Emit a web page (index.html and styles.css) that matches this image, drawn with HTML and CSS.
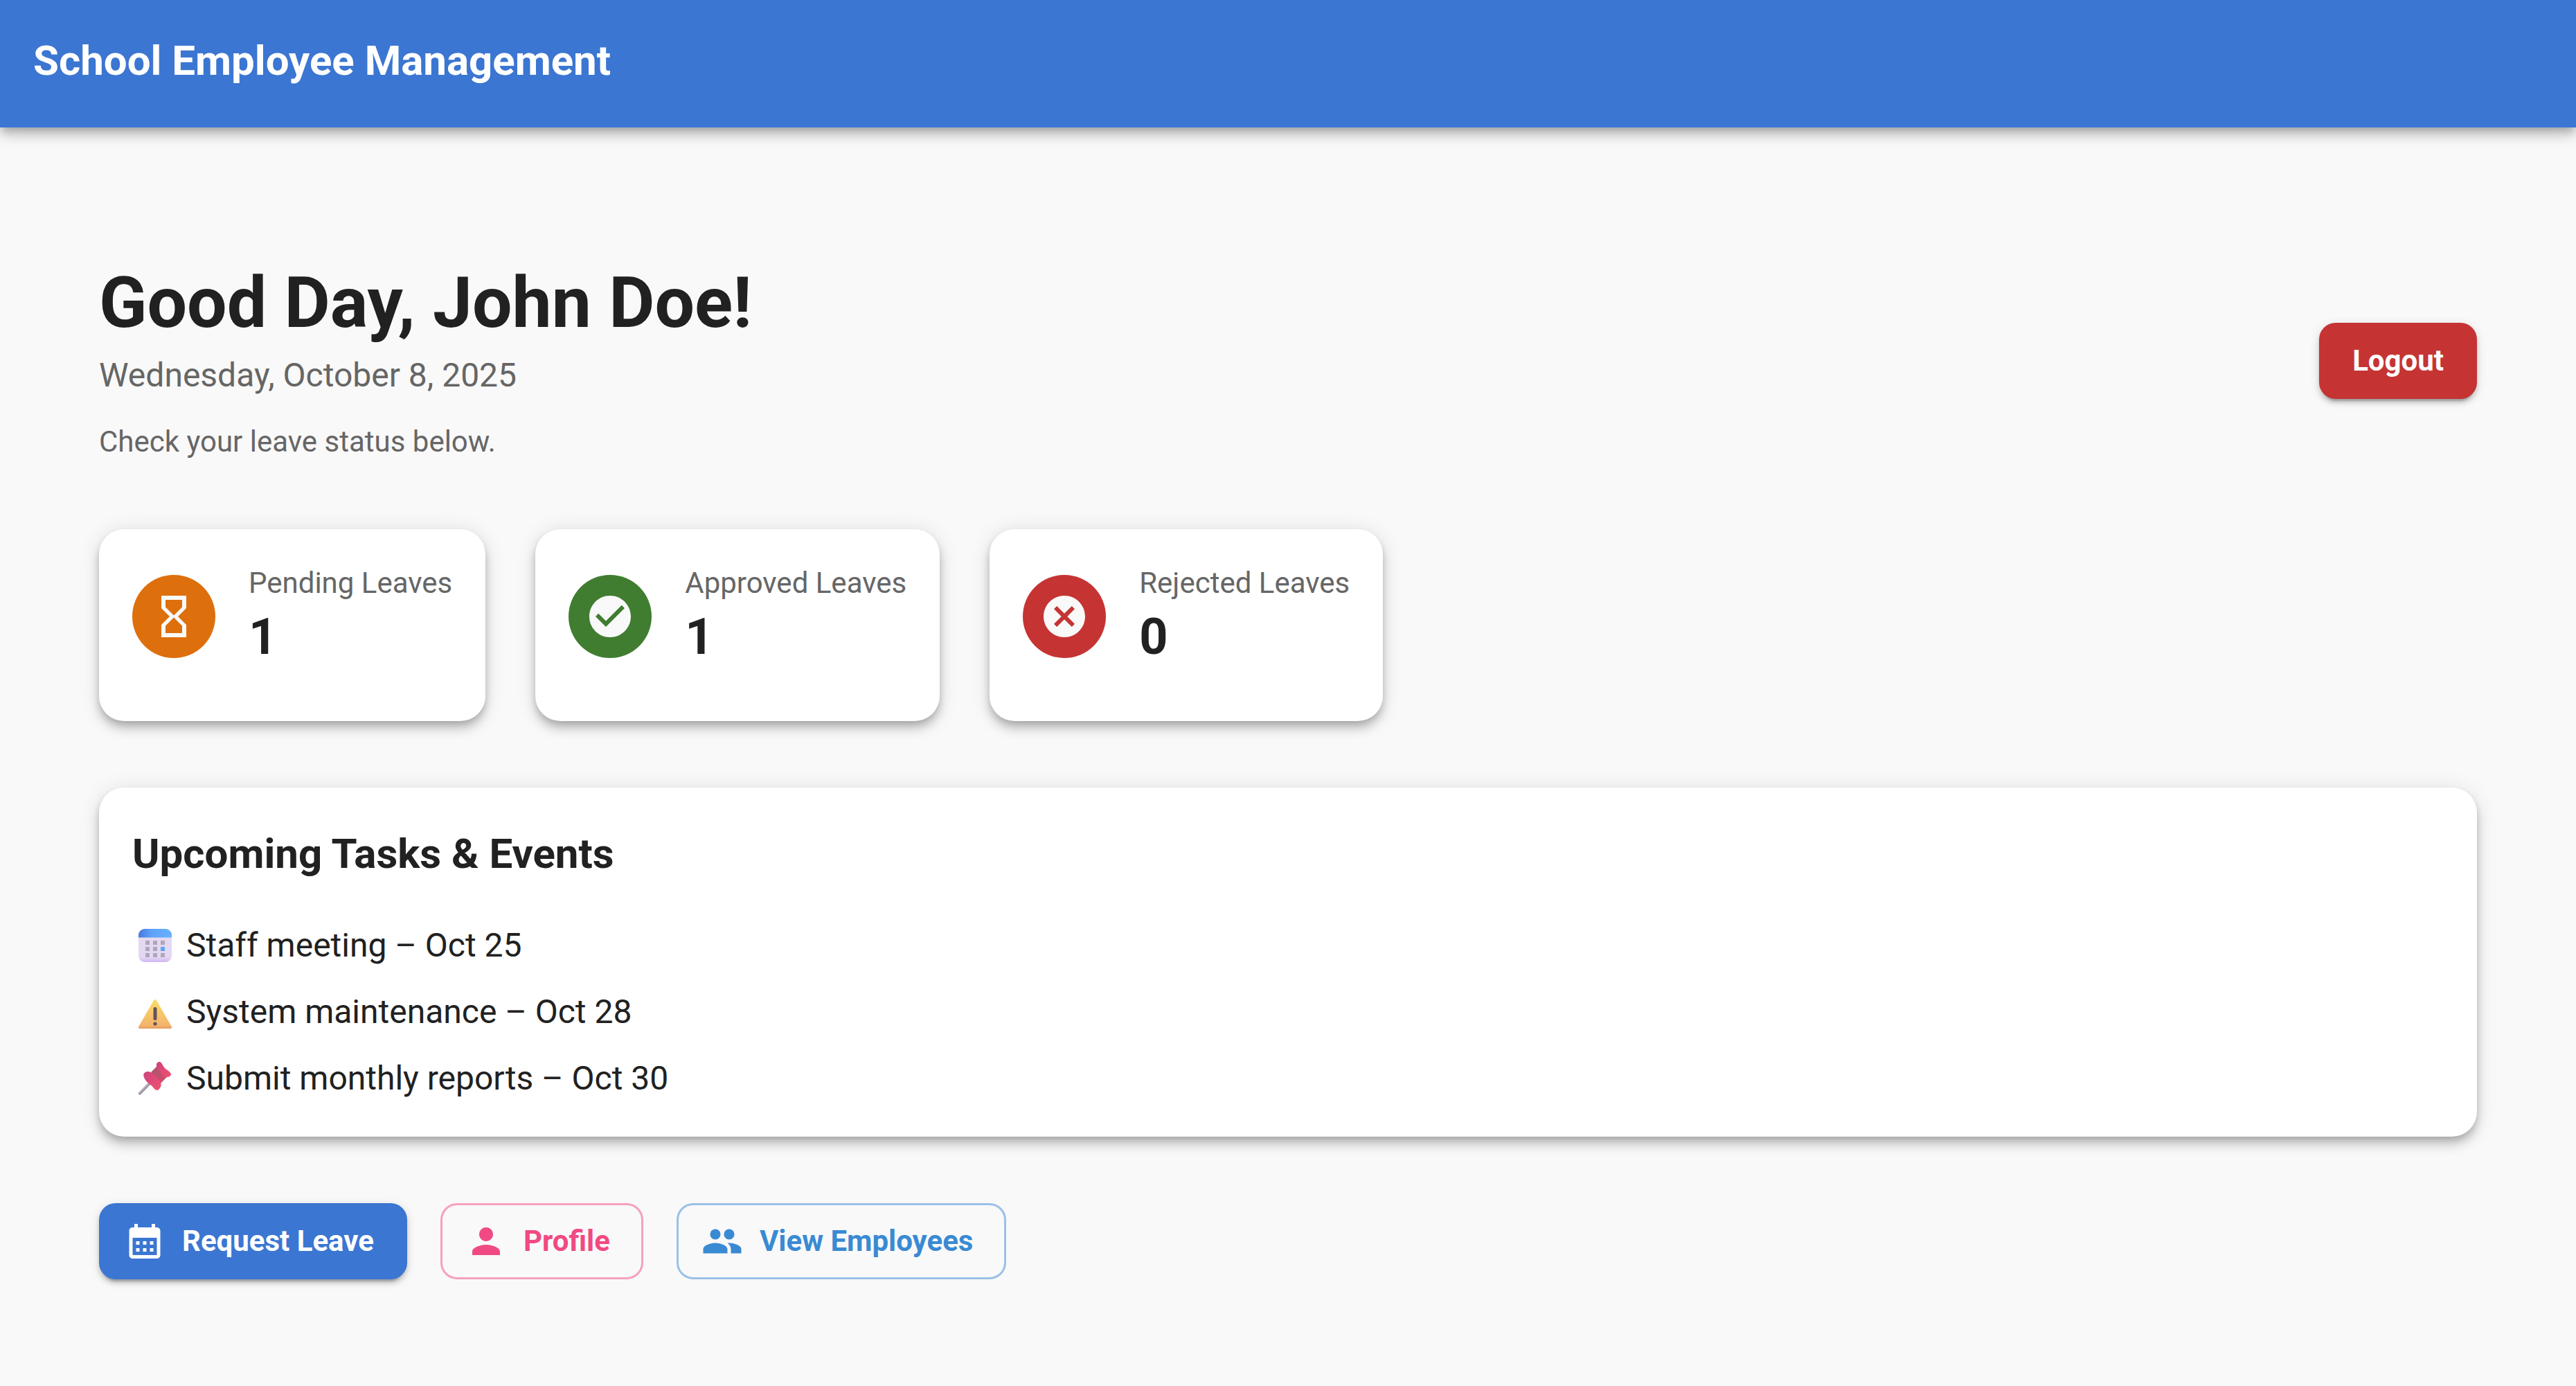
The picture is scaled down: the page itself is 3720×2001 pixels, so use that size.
FILE: index.html
```html
<!DOCTYPE html>
<html lang="en">
<head>
  <meta charset="utf-8">
  <title>School Employee Management</title>
  <link rel="stylesheet" href="styles.css">
</head>
<body>
  <header class="app-bar">
    <div class="app-title">School Employee Management</div>
  </header>

  <main class="page">
    <section class="welcome">
      <div>
        <h1 class="greeting">Good Day, John Doe!</h1>
        <p class="date">Wednesday, October 8, 2025</p>
        <p class="hint">Check your leave status below.</p>
      </div>
      <button class="btn btn-danger" type="button">Logout</button>
    </section>

    <section class="stats">
      <article class="card stat">
        <span class="avatar avatar-pending">
          <svg viewBox="0 0 24 24" aria-hidden="true"><path d="M6 2v6h.01L6 8.01 10 12l-4 4 .01.01H6V22h12v-5.990h-.01L18 16l-4-4 4-3.990-.01-.01H18V2H6zm10 14.500V20H8v-3.500l4-4 4 4zm-4-5l-4-4V4h8v3.500l-4 4z"/></svg>
        </span>
        <div>
          <p class="stat-label">Pending Leaves</p>
          <p class="stat-value">1</p>
        </div>
      </article>
      <article class="card stat">
        <span class="avatar avatar-approved">
          <svg viewBox="0 0 24 24" aria-hidden="true"><path d="M12 2C6.480 2 2 6.480 2 12s4.480 10 10 10 10-4.480 10-10S17.520 2 12 2zm-2 15l-5-5 1.410-1.410L10 14.170l7.590-7.590L19 8l-9 9z"/></svg>
        </span>
        <div>
          <p class="stat-label">Approved Leaves</p>
          <p class="stat-value">1</p>
        </div>
      </article>
      <article class="card stat">
        <span class="avatar avatar-rejected">
          <svg viewBox="0 0 24 24" aria-hidden="true"><path d="M12 2C6.470 2 2 6.470 2 12s4.470 10 10 10 10-4.470 10-10S17.530 2 12 2zm5 13.590L15.590 17 12 13.410 8.410 17 7 15.590 10.590 12 7 8.410 8.410 7 12 10.590 15.590 7 17 8.410 13.410 12 17 15.590z"/></svg>
        </span>
        <div>
          <p class="stat-label">Rejected Leaves</p>
          <p class="stat-value">0</p>
        </div>
      </article>
    </section>

    <section class="card tasks">
      <h2 class="tasks-title">Upcoming Tasks &amp; Events</h2>
      <ul class="task-list">
        <li class="task">
          <svg class="emoji" viewBox="0 0 48 48" aria-hidden="true">
            <defs>
              <linearGradient id="cal-top" x1="0" y1="0" x2="1" y2="0"><stop offset="0" stop-color="#4a78dc"/><stop offset=".4" stop-color="#5ea2fb"/><stop offset="1" stop-color="#68b0ff"/></linearGradient>
              <linearGradient id="cal-body" x1="0" y1="0" x2="0" y2="1"><stop offset="0" stop-color="#e4daf0"/><stop offset=".85" stop-color="#e3d8f2"/><stop offset="1" stop-color="#d2b4f5"/></linearGradient>
            </defs>
            <rect width="48" height="48" rx="9" fill="url(#cal-body)"/>
            <path d="M0 12.500V9a9 9 0 0 1 9-9h30a9 9 0 0 1 9 9v3.500z" fill="url(#cal-top)"/>
            <path fill="#b0a6bb" d="M10 17h6v6h-6zM21 17h6v6h-6zM32 17h6v6h-6zM10 26h6v6h-6zM21 26h6v6h-6zM10 35h6v6h-6zM21 35h6v6h-6zM32 35h6v6h-6z"/>
            <path fill="#5fa5f5" d="M32 26h6v6h-6z"/>
          </svg>
          <span>Staff meeting – Oct 25</span>
        </li>
        <li class="task">
          <svg class="emoji" viewBox="0 0 48 48" aria-hidden="true">
            <defs>
              <linearGradient id="warn" x1="0" y1="0" x2="0" y2="1"><stop offset="0" stop-color="#f9dc68"/><stop offset=".9" stop-color="#f4b36c"/><stop offset="1" stop-color="#e39a5c"/></linearGradient>
            </defs>
            <path d="M22 7.200a2.300 2.300 0 0 1 4 0L47.600 44.800A2 2 0 0 1 45.900 48H2.100A2 2 0 0 1 .4 44.800z" fill="url(#warn)"/>
            <path d="M24 19.500v14" stroke="#63525d" stroke-width="5" stroke-linecap="round"/>
            <circle cx="24" cy="41" r="2.600" fill="#63525d"/>
          </svg>
          <span>System maintenance – Oct 28</span>
        </li>
        <li class="task">
          <svg class="emoji" viewBox="0 0 48 48" aria-hidden="true">
            <defs>
              <linearGradient id="pin" x1="0" y1="0" x2="1" y2="1"><stop offset="0" stop-color="#c9447c"/><stop offset=".5" stop-color="#e04a78"/><stop offset="1" stop-color="#f0526c"/></linearGradient>
              <linearGradient id="pin-neck" x1="0" y1="0" x2="1" y2="1"><stop offset="0" stop-color="#a8586c"/><stop offset="1" stop-color="#d9486c"/></linearGradient>
            </defs>
            <path d="M2 45.500 18 29" stroke="#9c939f" stroke-width="4" stroke-linecap="round"/>
            <path d="M1.800 44.500 17 29" stroke="#c4bdc8" stroke-width="1.300" stroke-linecap="round"/>
            <path d="M18 15 27 6 42 21 32 31z" fill="url(#pin-neck)"/>
            <path d="M8 16.500c4-4.500 10-2.500 15 2.500s12 11 9 17c-2 4-4.500 6-7 4.500-3-1.500-4-5-8-7.500S5 22 8 16.500z" fill="url(#pin)"/>
            <path d="M26 3c1.500-3 4.500-4 6.500-2 2.500 2.500 3 6 6.500 9s8 5 8 8-4.500 5-8 3.500S24.500 9 26 3z" fill="url(#pin)"/>
          </svg>
          <span>Submit monthly reports – Oct 30</span>
        </li>
      </ul>
    </section>

    <nav class="actions">
      <button class="btn btn-primary" type="button">
        <svg class="btn-icon" viewBox="0 0 24 24" aria-hidden="true"><path d="M19 4h-1V2h-2v2H8V2H6v2H5c-1.110 0-1.990.9-1.990 2L3 20c0 1.100.89 2 2 2h14c1.100 0 2-.9 2-2V6c0-1.100-.9-2-2-2zm0 16H5V10h14v10zM9 14H7v-2h2v2zm4 0h-2v-2h2v2zm4 0h-2v-2h2v2zm-8 4H7v-2h2v2zm4 0h-2v-2h2v2zm4 0h-2v-2h2v2z"/></svg>
        Request Leave
      </button>
      <button class="btn btn-outline-pink" type="button">
        <svg class="btn-icon" viewBox="0 0 24 24" aria-hidden="true"><path d="M12 12c2.210 0 4-1.790 4-4s-1.790-4-4-4-4 1.790-4 4 1.790 4 4 4zm0 2c-2.670 0-8 1.340-8 4v2h16v-2c0-2.660-5.330-4-8-4z"/></svg>
        Profile
      </button>
      <button class="btn btn-outline-blue" type="button">
        <svg class="btn-icon" viewBox="0 0 24 24" aria-hidden="true"><path d="M16 11c1.660 0 2.990-1.340 2.990-3S17.660 5 16 5c-1.660 0-3 1.340-3 3s1.340 3 3 3zm-8 0c1.660 0 2.990-1.340 2.990-3S9.660 5 8 5C6.340 5 5 6.340 5 8s1.340 3 3 3zm0 2c-2.330 0-7 1.170-7 3.500V19h14v-2.500c0-2.330-4.670-3.500-7-3.500zm8 0c-.29 0-.62.02-.97.05 1.160.84 1.970 1.970 1.970 3.450V19h6v-2.500c0-2.330-4.670-3.500-7-3.500z"/></svg>
        View Employees
      </button>
    </nav>
  </main>
</body>
</html>
```
FILE: styles.css
```css
* {
  box-sizing: border-box;
}

body {
  margin: 0;
  min-height: 100vh;
  background: #f9f9f9;
  color: #212121;
  font-family: Roboto, "Liberation Sans", sans-serif;
}

h1, h2, p, ul {
  margin: 0;
  padding: 0;
}

.app-bar {
  padding: 40px 48px 48px;
  background: #3b76d2;
  color: #fff;
  box-shadow: 0 6px 12px -3px rgba(0, 0, 0, .2), 0 12px 15px 0 rgba(0, 0, 0, .14), 0 3px 30px 0 rgba(0, 0, 0, .12);
}

.app-title {
  font-size: 60px;
  font-weight: 700;
  line-height: 96px;
}

.page {
  display: flex;
  flex-direction: column;
  gap: 96px;
  padding: 190px 143px 144px;
}

.welcome {
  display: flex;
  align-items: center;
  justify-content: space-between;
}

.greeting {
  font-size: 102px;
  font-weight: 700;
  line-height: 126px;
}

.date {
  color: #666;
  font-size: 48px;
  line-height: 84px;
}

.hint {
  margin-top: 24px;
  color: #666;
  font-size: 42px;
  line-height: 60px;
}

.card {
  border-radius: 36px;
  background: #fff;
  box-shadow: 0 6px 12px -3px rgba(0, 0, 0, .2), 0 12px 15px 0 rgba(0, 0, 0, .14), 0 3px 30px 0 rgba(0, 0, 0, .12);
}

.stats {
  display: flex;
  flex-wrap: wrap;
  gap: 72px;
}

.stat {
  display: flex;
  align-items: center;
  gap: 48px;
  padding: 48px 48px 73px;
}

.avatar {
  display: flex;
  align-items: center;
  justify-content: center;
  width: 120px;
  height: 120px;
  border-radius: 50%;
}

.avatar svg {
  width: 72px;
  height: 72px;
  fill: #f9f9f9;
}

.avatar-pending {
  background: #de6f0d;
}

.avatar-approved {
  background: #407d30;
}

.avatar-rejected {
  background: #c53433;
}

.stat-label {
  color: #666;
  font-size: 42px;
  line-height: 60px;
}

.stat-value {
  font-size: 72px;
  font-weight: 700;
  line-height: 96px;
}

.tasks {
  padding: 48px 48px 36px;
}

.tasks-title {
  margin-bottom: 36px;
  font-size: 60px;
  font-weight: 700;
  line-height: 96px;
}

.task-list {
  list-style: none;
}

.task {
  display: flex;
  align-items: center;
  gap: 12px;
  padding: 12px 0;
  font-size: 48px;
  line-height: 72px;
}

.emoji {
  width: 48px;
  height: 48px;
  margin: 0 9px;
}

.actions {
  display: flex;
  flex-wrap: wrap;
  gap: 48px;
}

.btn {
  display: flex;
  align-items: center;
  padding: 18px 48px;
  border: 0;
  border-radius: 24px;
  background: none;
  font-family: inherit;
  font-size: 42px;
  font-weight: 700;
  line-height: 74px;
  cursor: pointer;
}

.btn-icon {
  width: 60px;
  height: 60px;
  margin: 0 24px 0 -12px;
  fill: currentColor;
}

.btn-primary,
.btn-danger {
  color: #fff;
  box-shadow: 0 9px 3px -6px rgba(0, 0, 0, .2), 0 6px 6px 0 rgba(0, 0, 0, .14), 0 3px 15px 0 rgba(0, 0, 0, .12);
}

.btn-primary {
  background: #3b76d2;
}

.btn-danger {
  background: #c53433;
}

.btn-outline-pink,
.btn-outline-blue {
  padding: 15px 45px;
  border: 3px solid;
}

.btn-outline-pink {
  border-color: #f6a1bf;
  color: #f14983;
}

.btn-outline-blue {
  border-color: #9ac1e7;
  color: #3a8ad3;
}
```
